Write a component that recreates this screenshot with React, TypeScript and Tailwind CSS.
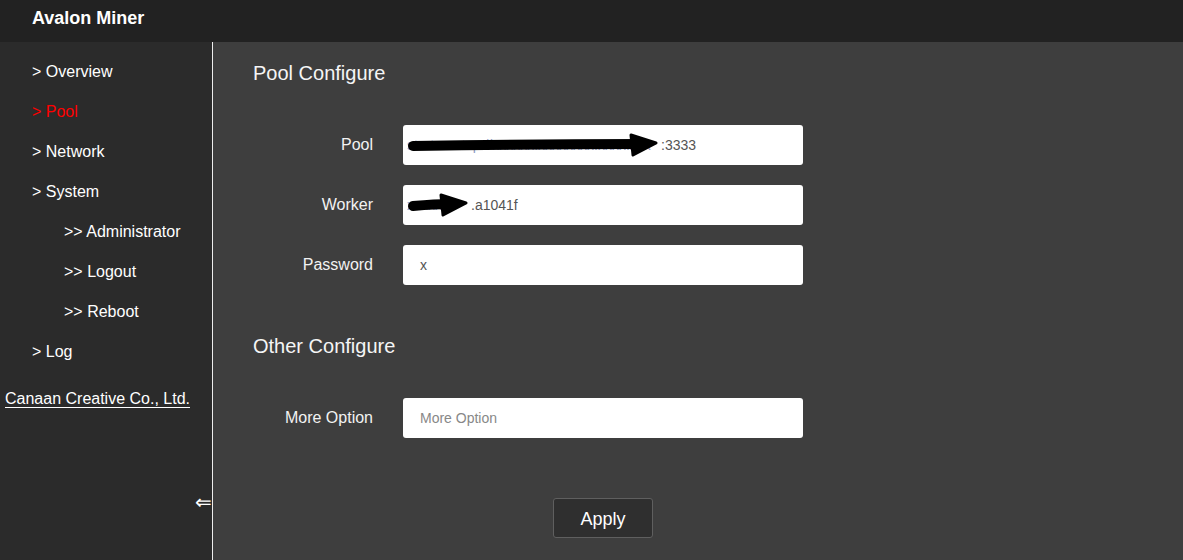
import React from "react";

const font = "font-['Liberation_Sans',Arial,sans-serif]";

function Arrow({ width }: { width: number }) {
  // black marker strokes drawn over the values
  return (
    <svg width={width} height="26" viewBox={`0 0 ${width} 26`} className="absolute left-0 top-1/2 -translate-y-1/2">
      <path
        d={`M10 14 Q${width / 2} 12 ${width - 20} 12`}
        stroke="#000"
        strokeWidth="10"
        strokeLinecap="round"
        fill="none"
      />
      <path
        d={`M${width - 28} 3 L${width - 3} 11 L${width - 26} 23 Z`}
        fill="#000"
        strokeLinejoin="round"
        stroke="#000"
        strokeWidth="3"
      />
    </svg>
  );
}

function Field({
  label,
  value,
  placeholder,
  arrow,
  hidden,
}: {
  label: string;
  value?: string;
  placeholder?: string;
  arrow?: number;
  hidden?: string;
}) {
  return (
    <div className="flex items-center">
      <div className="w-[120px] text-right text-[16px] text-[#f2f2f2]">{label}</div>
      <div className="relative ml-[30px] flex h-[40px] w-[400px] items-center rounded-[3px] bg-white">
        {hidden ? (
          <div className="relative flex h-full items-center pl-[4px] text-[14px]">
            <span
              className="overflow-hidden whitespace-nowrap text-[#8f9cc4]"
              style={{ width: (arrow ?? 0) - 2 }}
            >
              {hidden}
            </span>
            <span className="text-[#555]">{value}</span>
            {arrow && <Arrow width={arrow} />}
          </div>
        ) : value ? (
          <span className="pl-[17px] text-[14px] text-[#555]">{value}</span>
        ) : (
          <span className="pl-[17px] text-[14px] text-[#888]">{placeholder}</span>
        )}
      </div>
    </div>
  );
}

const nav = [
  { t: "> Overview", x: "pl-[32px]" },
  { t: "> Pool", x: "pl-[32px]", active: true },
  { t: "> Network", x: "pl-[32px]" },
  { t: "> System", x: "pl-[32px]" },
  { t: ">> Administrator", x: "pl-[64px]" },
  { t: ">> Logout", x: "pl-[64px]" },
  { t: ">> Reboot", x: "pl-[64px]" },
  { t: "> Log", x: "pl-[32px]" },
];

export default function App() {
  return (
    <div className={`${font} flex h-[560px] w-[1183px] flex-col overflow-hidden bg-[#3e3e3e]`}>
      <header className="flex h-[42px] shrink-0 items-start bg-[#222222] pl-[32px] pt-[5px]">
        <span className="text-[18px] font-bold text-white">Avalon Miner</span>
      </header>
      <div className="flex flex-1">
        <aside className="flex w-[213px] shrink-0 flex-col border-r border-[#eeeeee] bg-[#2b2b2b] pt-[10px]">
          {nav.map((n) => (
            <div
              key={n.t}
              className={`${n.x} flex h-[40px] items-center text-[16px] ${n.active ? "text-[#ff0000]" : "text-white"}`}
            >
              {n.t}
            </div>
          ))}
          <div className="flex h-[54px] items-center pl-[5px] text-[16px] text-white underline underline-offset-[3px]">
            Canaan Creative Co., Ltd.
          </div>
          <div className="mt-[66px] flex justify-end text-[20px] leading-none text-white">⇐</div>
        </aside>
        <main className="flex flex-1 flex-col pl-[40px]">
          <h2 className="mt-[16px] text-[20px] leading-[30px] text-[#f5f5f5]">Pool Configure</h2>
          <div className="mt-[37px] flex flex-col gap-[20px]">
            <Field label="Pool" hidden="stratum+tcp://xxxxxx.xxxxxxxx.xxxx.xxx" value=":3333" arrow={256} />
            <Field label="Worker" hidden="xxxxxxx" value=".a1041f" arrow={66} />
            <Field label="Password" value="x" />
          </div>
          <h2 className="mt-[46px] text-[20px] leading-[30px] text-[#f5f5f5]">Other Configure</h2>
          <div className="mt-[37px]">
            <Field label="More Option" placeholder="More Option" />
          </div>
          <div className="mt-[60px] pl-[300px]">
            <button className="h-[40px] w-[100px] rounded-[3px] border border-[#5f5f5f] bg-[#2f2f2f] pt-[2px] text-[18px] text-white">
              Apply
            </button>
          </div>
        </main>
      </div>
    </div>
  );
}
